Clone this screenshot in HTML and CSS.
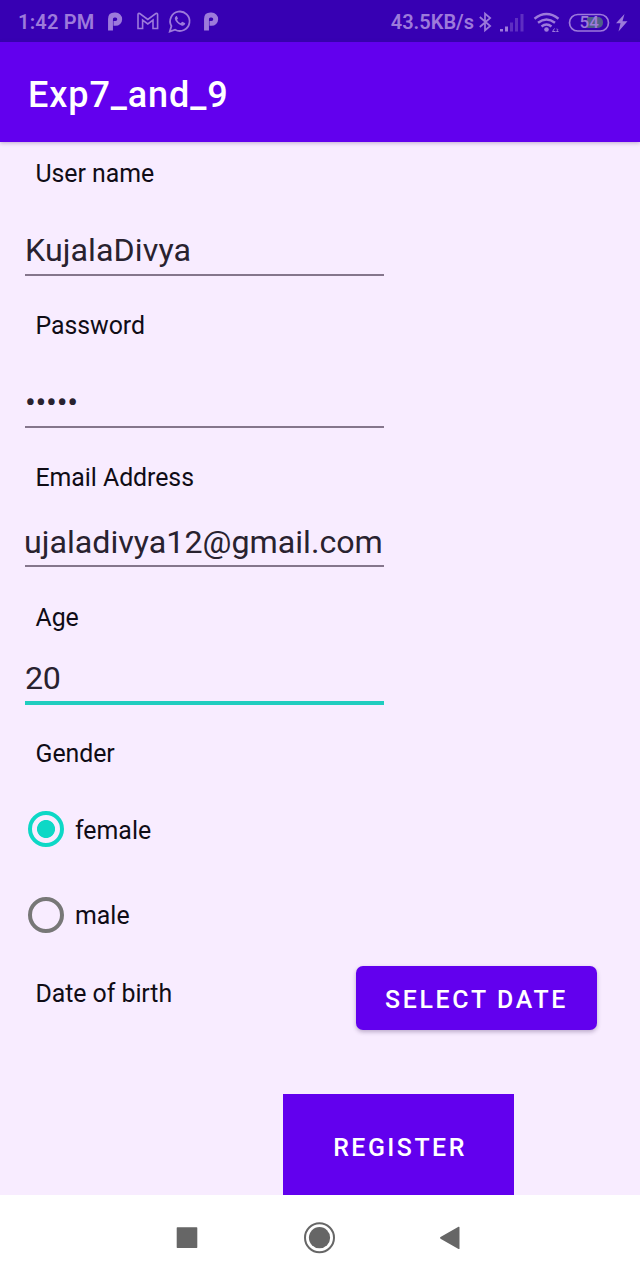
FILE: index.html
```
<!DOCTYPE html>
<html lang="en">
<head>
<meta charset="utf-8">
<title>Exp7_and_9</title>
<link rel="stylesheet" href="styles.css">
</head>
<body>
<div class="status">
  <span class="time">1:42 PM</span>
  <svg class="left-icons" width="116" height="26" viewBox="0 0 116 26" fill="none" stroke="currentColor">
    <path d="M5.500 22.500V11Q5.500 7 9.500 7H10.500a4.200 4.200 0 0 1 0 8.400H8.500" stroke-width="4.900"/>
    <path d="M33 20.500V6.500q0-1.500 1.800-1l8 6 8-6q1.800-.5 1.800 1v14h-4.600v-8.500l-5.200 4-5.200-4v8.500z" stroke-width="1.600"/>
    <path d="M64.800 23.500l1.600-5.500a9.700 9.700 0 1 1 3.700 3.700z" stroke-width="1.800"/>
    <path d="M71.300 8q-1.500.5-1.500 2.500.5 4 6.500 7 3.500 1 4-2.200l-3-1.600-1.800 1.600q-2.500-1.200-3.500-3.500l1-1.300L71.800 8z" fill="currentColor" stroke="none"/>
    <path d="M101.500 22.500V11Q101.500 7 105.500 7H106.500a4.200 4.200 0 0 1 0 8.400H104.500" stroke-width="4.900"/>
  </svg>
  <span class="speed">43.5KB/s</span>
  <svg class="right-icons" width="153" height="26" viewBox="0 0 153 26" fill="none" stroke="currentColor">
    <path d="M.800 8l10.400 9-5.200 4.500V4.500l5.200 4.500-10.400 9" stroke-width="1.700"/>
    <g fill="currentColor" stroke="none">
      <path d="M21 20h3v2.500h-3zM26 17.500h3v5h-3z"/>
      <path opacity=".38" d="M31 13.500h3v9h-3zM36 9h3v13.500h-3zM41.500 5h3v17.500h-3z"/>
    </g>
    <g stroke-width="2.400">
      <path d="M55.500 9.800q12-9.500 24 0M59 13.800q8.500-6.500 17 0M62.500 17.500q5-3.800 10 0"/>
    </g>
    <circle cx="67.500" cy="20.500" r="2.300" fill="currentColor" stroke="none"/>
    <path d="M75.500 19.500l-2 3h3M77.500 20q2.500 0 0 2.500h2" stroke-width="1"/>
    <path d="M108 8h11a5 5 0 0 1 5 5v1a5 5 0 0 1-5 5h-11z" fill="#4f6089" stroke="none"/>
    <rect x="90.500" y="5.500" width="39" height="16.500" rx="8.250" stroke-width="1.700"/>
    <text class="battery" x="100.500" y="19">54</text>
    <path d="M145.500 5l-8.500 9.200h4.500L139.500 22.500 148.500 12.300h-5z" fill="currentColor" stroke="none"/>
  </svg>
</div>
<header class="appbar">Exp7_and_9</header>
<main class="form">
  <div class="field">
    <div class="label">User name</div>
    <div class="input">KujalaDivya</div>
  </div>
  <div class="field">
    <div class="label">Password</div>
    <div class="input password">•••••</div>
  </div>
  <div class="field email">
    <div class="label">Email Address</div>
    <div class="input">ujaladivya12@gmail.com</div>
  </div>
  <div class="field age">
    <div class="label">Age</div>
    <div class="input focused">20</div>
  </div>
  <div class="label gender">Gender</div>
  <div class="radios">
    <div class="option"><span class="radio checked"></span><span class="option-text">female</span></div>
    <div class="option"><span class="radio"></span><span class="option-text male">male</span></div>
  </div>
  <div class="birth">
    <div class="label dob">Date of birth</div>
    <div class="button select">SELECT DATE</div>
  </div>
  <div class="button register">REGISTER</div>
</main>
<nav class="nav">
  <svg width="640" height="85" viewBox="0 0 640 85" fill="#666">
    <rect x="176.700" y="32.300" width="20.600" height="20.600" rx=".6"/>
    <circle cx="319.500" cy="42.700" r="14.500" fill="none" stroke="#666" stroke-width="2"/>
    <circle cx="319.500" cy="42.700" r="10.600"/>
    <path d="M440.500 42.100L458.500 31.800q1-.4 1 .6v21q0 1-1 .6L440.500 43.700q-1-.8 0-1.600z"/>
  </svg>
</nav>
</body>
</html>
```
FILE: styles.css
```
* { box-sizing: border-box; }
body {
  margin: 0;
  width: 640px;
  height: 1280px;
  display: flex;
  flex-direction: column;
  overflow: hidden;
  background: #f8ecff;
  color: #100c16;
  font-family: Roboto, sans-serif;
}
.status {
  height: 42px;
  flex: none;
  display: flex;
  align-items: center;
  padding: 2px 8px 0 18px;
  background: #3700b3;
  color: #9d7adb;
  white-space: nowrap;
}
.time, .speed {
  font-size: 20px;
  font-weight: 600;
  line-height: 24px;
}
.time { width: 87px; letter-spacing: 0.2px; }
.speed { margin-left: auto; letter-spacing: 0; margin-right: 5px; }
.left-icons { margin-top: -2px; }
.right-icons { margin-top: -1px; }
.battery {
  font-size: 17px;
  font-weight: 500;
  fill: currentColor;
  stroke: none;
}
.appbar {
  height: 100px;
  flex: none;
  padding: 4px 28px 0;
  background: #6200ee;
  color: #fff;
  font-size: 36px;
  font-weight: 500;
  letter-spacing: 0.9px;
  line-height: 98px;
  box-shadow: 0 1px 4px rgba(60, 20, 90, 0.3);
}
.form {
  height: 1053px;
  flex: none;
  padding-top: 17px;
  display: flex;
  flex-direction: column;
}
.field { margin-bottom: 35px; }
.label {
  padding-left: 35.5px;
  font-size: 24.89px;
  letter-spacing: -0.05px;
  line-height: 30px;
}
.input {
  width: 359px;
  height: 45px;
  margin: 42px 0 0 25px;
  border-bottom: 2px solid #85768c;
  color: #29222f;
  font-size: 32.2px;
  letter-spacing: 0.08px;
  line-height: 38px;
  white-space: nowrap;
}
.input.password { letter-spacing: -0.3px; }
.email { margin-bottom: 36px; }
.email .input {
  height: 44px;
  margin-top: 30px;
  letter-spacing: 0;
  text-indent: -1px;
}
.age { margin-bottom: 34px; }
.age .input { height: 46px; margin-top: 26px; letter-spacing: -0.3px; }
.input.focused { border-bottom: 4px solid #20cdbf; }
.radios {
  display: flex;
  flex-direction: column;
  gap: 49.5px;
  padding: 42px 0 0 28px;
}
.option {
  height: 36px;
  display: flex;
  align-items: center;
  gap: 11px;
}
.radio {
  width: 36px;
  height: 36px;
  border: 4px solid #777;
  border-radius: 50%;
}
.radio.checked {
  border-color: #0dd8c6;
  background: radial-gradient(circle, #0dd8c6 8.6px, transparent 9.4px);
}
.option-text {
  padding-top: 3px;
  font-size: 24.89px;
  line-height: 30px;
}
.birth {
  display: flex;
  justify-content: space-between;
  padding: 33.5px 43.5px 0 0;
}
.dob { padding-top: 13px; }
.button {
  display: flex;
  align-items: center;
  justify-content: center;
  background: #6200ee;
  color: #fff;
  font-size: 24.89px;
  font-weight: 500;
  letter-spacing: 2.5px;
}
.select {
  width: 241px;
  height: 64px;
  padding: 3px 0 0 1px;
  border-radius: 7px;
  letter-spacing: 2.7px;
  box-shadow: 0 2px 4px rgba(50, 20, 80, 0.3);
}
.register {
  width: 231px;
  height: 101px;
  margin: 64px 0 0 283px;
  padding: 6px 0 0 3px;
}
.nav {
  height: 85px;
  flex: none;
  background: #fff;
}
.nav svg { display: block; }
```
